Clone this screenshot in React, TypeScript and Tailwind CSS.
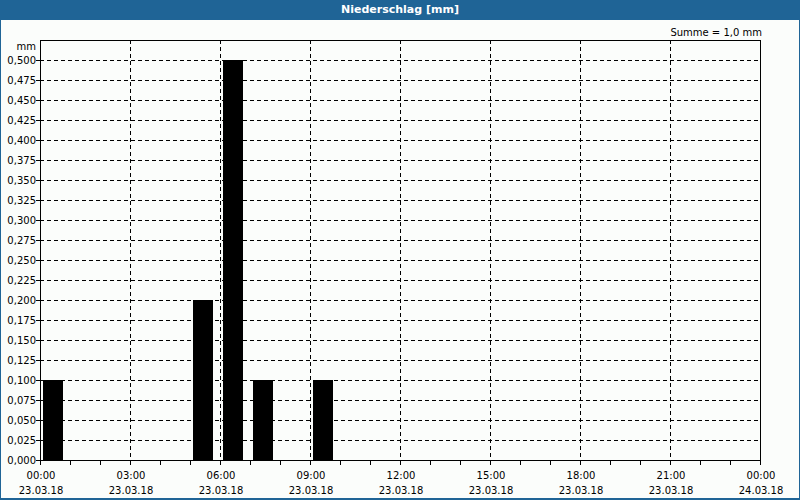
import React from 'react';

const yTicks = Array.from({ length: 21 }, (_, i) => i);
const bars: { hour: number; value: number }[] = [
  { hour: 0, value: 0.1 },
  { hour: 5, value: 0.2 },
  { hour: 6, value: 0.5 },
  { hour: 7, value: 0.1 },
  { hour: 9, value: 0.1 },
];
const xLabels = ['00:00', '03:00', '06:00', '09:00', '12:00', '15:00', '18:00', '21:00', '00:00'];

const fmt = (v: number) => v.toFixed(3).replace('.', ',');

const App: React.FC = () => {
  return (
    <div className="w-[800px] h-[500px] bg-[#1f6496] flex flex-col" style={{ fontFamily: '"DejaVu Sans", Verdana, sans-serif' }}>
      {/* Header */}
      <div className="h-[20px] flex items-center justify-center text-white text-[11px] font-bold">
        Niederschlag [mm]
      </div>

      {/* Chart */}
      <div className="mx-px mb-[2px] flex-1 bg-[#fbfdfb]">
        <svg width="798" height="478" viewBox="1 20 798 478" className="block">
          <text x="762" y="36" fontSize="10" textAnchor="end" fill="#000">Summe = 1,0 mm</text>
          <text x="36" y="50" fontSize="10" textAnchor="end" fill="#000">mm</text>

          {/* horizontal grid */}
          {yTicks.map((i) => {
            const y = 460 - i * 20;
            return (
              <g key={i}>
                {i > 0 && (
                  <line x1="40" x2="760" y1={y + 0.5} y2={y + 0.5} stroke="#000" strokeDasharray="4 3" />
                )}
                <line x1="36" x2="40" y1={y + 0.5} y2={y + 0.5} stroke="#000" />
                <text x="36" y={y + 4} fontSize="10" textAnchor="end" fill="#000">{fmt(i * 0.025)}</text>
              </g>
            );
          })}

          {/* vertical grid */}
          {[1, 2, 3, 4, 5, 6, 7].map((i) => (
            <line key={i} x1={40 + i * 90 + 0.5} x2={40 + i * 90 + 0.5} y1="40" y2="460" stroke="#000" strokeDasharray="4 3" />
          ))}

          {/* bars */}
          {bars.map((b) => {
            const h = (b.value / 0.025) * 20;
            return <rect key={b.hour} x={43 + b.hour * 30} y={460 - h} width="20" height={h} fill="#000" />;
          })}

          {/* frame */}
          <rect x="40.5" y="40.5" width="720" height="420" fill="none" stroke="#000" />

          {/* hour ticks */}
          {Array.from({ length: 25 }, (_, i) => (
            <line key={i} x1={40 + i * 30 + 0.5} x2={40 + i * 30 + 0.5} y1="461" y2="465" stroke="#000" />
          ))}

          {xLabels.map((l, i) => (
            <g key={i}>
              <text x={41 + i * 90} y="479" fontSize="10" textAnchor="middle" fill="#000">{l}</text>
              <text x={41 + i * 90} y="494" fontSize="10" textAnchor="middle" fill="#000">{i === 8 ? '24.03.18' : '23.03.18'}</text>
            </g>
          ))}
        </svg>
      </div>
    </div>
  );
};

export default App;
